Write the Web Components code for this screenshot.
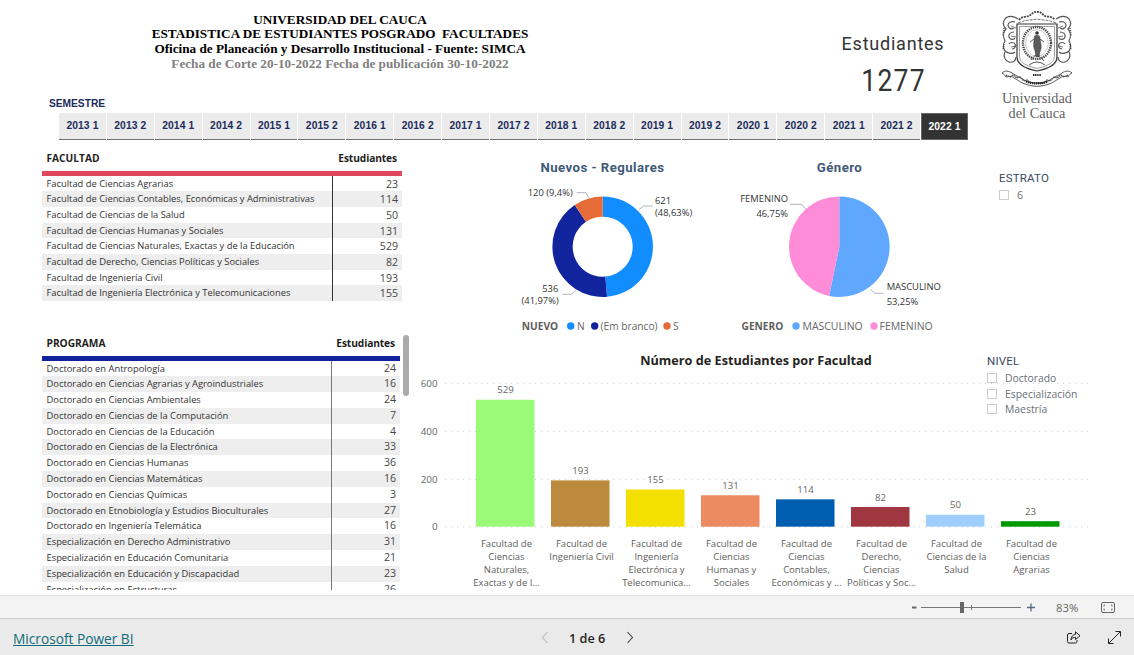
<!DOCTYPE html>
<html lang="es"><head><meta charset="utf-8"><title>Estudiantes Posgrado</title>
<style>
html,body{margin:0;padding:0;background:#fff;overflow:hidden}
body{font-family:"Open Sans","Liberation Sans",sans-serif}
</style></head><body>
<pbi-app>
  <report-top slot="top">
    <report-title>
      <span>UNIVERSIDAD DEL CAUCA</span>
      <span>ESTADISTICA DE ESTUDIANTES POSGRADO&nbsp; FACULTADES</span>
      <span>Oficina de Planeación y Desarrollo Institucional - Fuente: SIMCA</span>
      <span class="muted" style="color:#7f7f7f">Fecha de Corte 20-10-2022 Fecha de publicación 30-10-2022</span>
    </report-title>
    <kpi-card label="Estudiantes" value="1277"></kpi-card>
    <uni-seal></uni-seal>
    <semester-slicer label="SEMESTRE" selected="2022 1"
      items="2013 1,2013 2,2014 1,2014 2,2015 1,2015 2,2016 1,2016 2,2017 1,2017 2,2018 1,2018 2,2019 1,2019 2,2020 1,2020 2,2021 1,2021 2,2022 1"></semester-slicer>
  </report-top>
  <report-main slot="main">
    <data-table slot="left" heading="FACULTAD" metric="Estudiantes" accent="#e0475a" split="290" rule="#333" pitch="15.7" width="360" nudge="1" style="margin-top:3px">
      <table-row label="Facultad de Ciencias Agrarias" value="23"></table-row>
      <table-row label="Facultad de Ciencias Contables, Económicas y Administrativas" value="114"></table-row>
      <table-row label="Facultad de Ciencias de la Salud" value="50"></table-row>
      <table-row label="Facultad de Ciencias Humanas y Sociales" value="131"></table-row>
      <table-row label="Facultad de Ciencias Naturales, Exactas y de la Educación" value="529"></table-row>
      <table-row label="Facultad de Derecho, Ciencias Políticas y Sociales" value="82"></table-row>
      <table-row label="Facultad de Ingeniería Civil" value="193"></table-row>
      <table-row label="Facultad de Ingeniería Electrónica y Telecomunicaciones" value="155"></table-row>
    </data-table>
    <data-table slot="left" heading="PROGRAMA" metric="Estudiantes" accent="#12239e" split="288.5" rule="#777" pitch="15.8" width="358" nudge="0" scroll style="margin-top:30px;flex:1;min-height:0">
      <table-row label="Doctorado en Antropología" value="24"></table-row>
      <table-row label="Doctorado en Ciencias Agrarias y Agroindustriales" value="16"></table-row>
      <table-row label="Doctorado en Ciencias Ambientales" value="24"></table-row>
      <table-row label="Doctorado en Ciencias de la Computación" value="7"></table-row>
      <table-row label="Doctorado en Ciencias de la Educación" value="4"></table-row>
      <table-row label="Doctorado en Ciencias de la Electrónica" value="33"></table-row>
      <table-row label="Doctorado en Ciencias Humanas" value="36"></table-row>
      <table-row label="Doctorado en Ciencias Matemáticas" value="16"></table-row>
      <table-row label="Doctorado en Ciencias Químicas" value="3"></table-row>
      <table-row label="Doctorado en Etnobiología y Estudios Bioculturales" value="27"></table-row>
      <table-row label="Doctorado en Ingeniería Telemática" value="16"></table-row>
      <table-row label="Especialización en Derecho Administrativo" value="31"></table-row>
      <table-row label="Especialización en Educación Comunitaria" value="21"></table-row>
      <table-row label="Especialización en Educación y Discapacidad" value="23"></table-row>
      <table-row label="Especialización en Estructuras" value="26"></table-row>
    </data-table>
    <donut-pair slot="right"></donut-pair>
    <facultad-bars slot="right"></facultad-bars>
  </report-main>
  <zoom-bar slot="zoom"></zoom-bar>
  <report-footer slot="footer"></report-footer>
</pbi-app>

<script>
function def(name, css, html, init){
  customElements.define(name, class extends HTMLElement{
    connectedCallback(){
      if(this.shadowRoot) return;
      const r=this.attachShadow({mode:'open'});
      const a=n=>this.getAttribute(n);
      r.innerHTML='<style>'+css+'</style>'+(typeof html==='function'?html(a,this):html);
      if(init) init(r,this);
    }
  });
}
const SANS='"Open Sans","Noto Sans","Liberation Sans",sans-serif';
const DIN='Roboto,"Liberation Sans",sans-serif';

def('pbi-app',`:host{display:flex;flex-direction:column;width:1134px;height:655px;overflow:hidden;background:#fff}
 .r{height:595px;flex:none;display:flex;flex-direction:column;overflow:hidden}`,
 `<div class="r"><slot name="top"></slot><slot name="main"></slot></div><slot name="zoom"></slot><slot name="footer"></slot>`);

def('report-top',`:host{display:grid;grid-template-columns:680px 106px 214px 74px;grid-template-rows:97px 46px;flex:none}
 ::slotted(report-title){grid-column:1;grid-row:1}
 ::slotted(kpi-card){grid-column:3;grid-row:1}
 ::slotted(uni-seal){grid-column:4;grid-row:1/3}
 ::slotted(semester-slicer){grid-column:1/4;grid-row:2}`,`<slot></slot>`);

def('report-title',`:host{display:flex;flex-direction:column;align-items:center;padding-top:12.600px;box-sizing:border-box;
 font:bold 13.200px/14.700px "Liberation Serif","Times New Roman",serif;color:#000;white-space:pre}
 ::slotted(span){display:block}`,`<slot></slot>`);

def('kpi-card',`:host{display:flex;flex-direction:column;align-items:center;padding-top:32px;box-sizing:border-box;color:#333;font-family:${DIN}}
 .l{font-size:18px;line-height:24px;letter-spacing:.78px}
 .v{font-size:31.500px;line-height:36px;margin:7px 0 0 2px;letter-spacing:1.600px;transform:scaleX(.84)}`,
 a=>`<div class="l">${a('label')}</div><div class="v">${a('value')}</div>`);

def('uni-seal',`:host{display:flex;flex-direction:column;align-items:center;padding-top:9px;color:#5f5f5f;font-family:"Liberation Serif",serif;font-size:14.300px;line-height:15px;text-align:center;white-space:nowrap;box-sizing:border-box;width:74px}
 svg{display:block;margin-bottom:1px}`,
 `<svg width="72" height="81" viewBox="1001 9 72 81" fill="none" stroke="#4f4f4f" stroke-width=".8">
  <g stroke="#555" stroke-width="1.200">
   <path d="M1018 19c-4-3-10-4-13 0c-3 4-1 8 1 10c-3 3-3 8-1 12c-2 3-2 7 0 10c3 3 8 3 10 1"/>
   <path d="M1056 19c4-3 10-4 13 0c3 4 1 8-1 10c3 3 3 8 1 12c2 3 2 7 0 10c-3 3-8 3-10 1"/>
   <path d="M1015 22c-3-1-7 0-7 3s3 5 6 3M1014 32c-3 0-6 2-5 5s5 3 6 1M1009 44c1-2 5-2 6 0s0 5-3 5"/>
   <path d="M1059 22c3-1 7 0 7 3s-3 5-6 3M1060 32c3 0 6 2 5 5s-5 3-6 1M1065 44c-1-2-5-2-6 0s0 5 3 5"/>
   <path d="M1005 52c-2 4 0 9 4 10c4 1 7-1 7-5M1069 52c2 4 0 9-4 10c-4 1-7-1-7-5"/>
   <path d="M1011 26l5 2M1011 36l5 1M1011 47l5-1M1063 26l-5 2M1063 36l-5 1M1063 47l-5-1" stroke-width=".8"/>
  </g>
  <path d="M1004 28l-1 8M1004 44l-1 6M1070 28l1 8M1070 44l1 6" stroke-width="1.600" stroke-dasharray="1 1"/>
  <path d="M1019 20c3-4 7-3 10-4c3-2 5-5 8-4c3-1 5 2 8 4c3 1 7 0 10 4" stroke="#444" stroke-width="1.800" stroke-dasharray="2 .9"/>
  <path d="M1018 23c5-2 9-3 13-3c4-1 8-1 12 0c4 0 8 1 13 3" stroke-width=".8" stroke-dasharray="3 1"/>
  <path d="M1017 24H1057V57Q1057 67 1037 71Q1017 67 1017 57Z" stroke="#333" stroke-width="1.200" fill="#fff"/>
  <path d="M1019.500 26.500H1054.500V56.500Q1054.500 65 1037 68.500Q1019.500 65 1019.500 56.500Z" stroke="#777" stroke-width=".7"/>
  <ellipse cx="1037" cy="43" rx="14" ry="16" stroke="#444" stroke-width="2.400" stroke-dasharray="1.300 .9"/>
  <ellipse cx="1037" cy="43" rx="11.300" ry="13.300" stroke="#999" stroke-width=".5"/>
  <circle cx="1037" cy="33" r="1.800" fill="#333" stroke="none"/>
  <path d="M1034.500 36c1-1 4-1 5 0l1.500 8c.6 3 0 6-1 8l-1 5h-3l-1-6c-1-2-1.800-5-1.300-8z" fill="#5a5a5a" stroke="#333" stroke-width=".4"/>
  <path d="M1031 60c2-3 4-5 6-5s4 3 7 6M1030 42l4-3M1040 39l4 3M1029 65q8-6 16 0" stroke="#444" stroke-width=".9"/>
  <path d="M1002 73c3-3 7-2 10 0c4 3 8 4 12 7c8 4 18 4 26 0c4-3 8-4 12-7c3-2 7-3 10 0c-2 1-3 2-4 4c-3-1-6-1-8 1c-4 2-7 5-11 6c-8 3-16 3-24 0c-4-1-7-4-11-6c-2-2-5-2-8-1c-1-2-2-3-4-4z" fill="#fff" stroke="#444" stroke-width=".9"/>
  <path d="M1006 75l4 2l3-2l4 3l3-1l4 4l3-1l4 3h12l4-3l3 1l4-4l3 1l4-3l3 2l4-2" stroke="#444" stroke-width="1.300" stroke-dasharray="1.500 .7"/>
  <path d="M1026 81.500q11 4 22 0" stroke="#222" stroke-width="2.200" stroke-dasharray="1.300 .7"/>
  <path d="M1033 75h8" stroke="#222" stroke-width="1.800" stroke-dasharray="1.200 .6"/>
 </svg><div>Universidad</div><div>del Cauca</div>`);

def('semester-slicer',`:host{display:block;position:relative;font-family:"Liberation Sans",Arial,sans-serif;color:#1b2b5c;padding-left:59px;box-sizing:border-box;padding-top:16px}
 .t{position:absolute;left:49px;top:0;font-weight:bold;font-size:10.200px;line-height:13px}
 .row{display:flex;gap:1px}
 .b{width:46.900px;height:26.500px;box-sizing:border-box;background:#ebebeb;border-bottom:1px solid #6f6f6f;font-weight:bold;font-size:10.300px;display:flex;align-items:center;justify-content:center;white-space:nowrap;letter-spacing:.1px}
 .on{background:#333;color:#fff;border:1px solid #666}`,
 a=>`<div class="t">${a('label')}</div><div class="row">${a('items').split(',').map(s=>`<div class="b${s===a('selected')?' on':''}">${s}</div>`).join('')}</div>`);

def('report-main',`:host{display:flex;flex:1;min-height:0}
 .l{display:flex;flex-direction:column;width:412px;flex:none;padding-left:42px;box-sizing:border-box;padding-bottom:5.500px}
 .r{flex:1;display:flex;flex-direction:column;min-width:0}`,
 `<div class="l"><slot name="left"></slot></div><div class="r"><slot name="right"></slot></div>`);

def('data-table',`:host{display:block;position:relative;color:#252423;font-family:${SANS}}
 .w{height:100%;overflow:hidden;display:flex;flex-direction:column}
 .h{display:grid;height:25px;box-sizing:border-box;align-items:center;font-weight:700;font-size:10.200px;flex:none;padding-bottom:1px;color:#1f1e1d}
 .h div:first-child{padding-left:4.500px}
 .h div:last-child{text-align:right;padding-right:5px;white-space:nowrap;letter-spacing:-.1px}
 .line{height:4.500px;flex:none}
 .rows{flex:1;min-height:0;overflow:hidden}
 .sb{position:absolute;left:361px;top:4px;width:6px;height:61px;border-radius:3px;background:#ababab}`,
 (a,h)=>`<div class="w" style="width:${a('width')}px"><div class="h" style="grid-template-columns:${a('split')}px 1fr"><div>${a('heading')}</div><div>${a('metric')}</div></div>
  <div class="line" style="background:${a('accent')}"></div><div class="rows"><slot></slot></div></div>${h.hasAttribute('scroll')?'<div class="sb"></div>':''}`,
 (r,h)=>{[...h.querySelectorAll('table-row')].forEach(x=>{x.style.setProperty('--split',h.getAttribute('split')+'px');x.style.setProperty('--pitch',h.getAttribute('pitch')+'px');x.style.setProperty('--rule',h.getAttribute('rule'));x.style.setProperty('--nudge',h.getAttribute('nudge')+'px');});});

def('table-row',`:host{display:grid;grid-template-columns:var(--split) 1fr;height:var(--pitch);align-items:stretch;font-size:9.350px;color:#333}
 :host(:nth-child(even)){background:#eeeeee}
 .a{padding-left:4.500px;white-space:nowrap;overflow:hidden;line-height:calc(var(--pitch) + var(--nudge))}
 .b{border-left:1px solid var(--rule);text-align:right;padding-right:4px;font-size:10.600px;line-height:calc(var(--pitch) + var(--nudge));color:#484644;overflow:hidden}`,
 a=>`<div class="a">${a('label')}</div><div class="b">${a('value')}</div>`);

function arc(cx,cy,R,r,a0,a1){
  const p=(rad,an)=>{const t=(an-90)*Math.PI/180;return [(cx+rad*Math.cos(t)).toFixed(2),(cy+rad*Math.sin(t)).toFixed(2)].join(' ')};
  const lg=a1-a0>180?1:0;
  return r>0?`M${p(R,a0)}A${R} ${R} 0 ${lg} 1 ${p(R,a1)}L${p(r,a1)}A${r} ${r} 0 ${lg} 0 ${p(r,a0)}Z`
            :`M${cx} ${cy}L${p(R,a0)}A${R} ${R} 0 ${lg} 1 ${p(R,a1)}Z`;
}
const slices=(cx,cy,R,r,list)=>{let a=0;return list.map(([pct,c])=>{const b=a+pct*3.6,d=arc(cx,cy,R,r,a,b);a=b;return `<path d="${d}" fill="${c}"/>`}).join('')};

def('donut-pair',`:host{display:flex;height:202px;flex:none;position:relative}
 svg{display:block;flex:none;font-family:${SANS}}
 .sp{width:88px;flex:none}
 .ti{font:700 13.200px ${DIN};fill:#3e5a78;letter-spacing:.45px;text-anchor:middle}
 .lb{font-size:9.400px;fill:#333}
 .e{text-anchor:end}
 .cn{fill:none;stroke:#a9adb5;stroke-width:.9}
 .lg{font-size:10.200px;fill:#666}
 .lg2{font-size:10.450px;fill:#666}
 .lgb{font-size:10.200px;font-weight:700;fill:#605e5c}`,
 `<div class="sp"></div>
 <svg width="220" height="202" viewBox="500 143 220 202">
  <text class="ti" x="602.500" y="172">Nuevos - Regulares</text>
  ${slices(602.7,246.7,50.3,30,[[48.63,'#118dff'],[41.97,'#12239e'],[9.4,'#e66c37']])}
  <path class="cn" d="M576.500 192.700H586L588.500 197.500"/><path class="cn" d="M638.500 210L643.500 206H652.500"/><path class="cn" d="M562.500 294.300H571.500L576 290.500"/>
  <text class="lb" x="655" y="204">621</text><text class="lb" x="655" y="215.500">(48,63%)</text>
  <text class="lb e" x="572.700" y="196">120 (9,4%)</text>
  <text class="lb e" x="558.300" y="291.500">536</text><text class="lb e" x="558.700" y="304">(41,97%)</text>
  <text class="lgb" x="521.700" y="329.600">NUEVO</text>
  <circle cx="570.700" cy="326" r="3.700" fill="#118dff"/><text class="lg" x="577" y="329.600">N</text>
  <circle cx="594.700" cy="326" r="3.700" fill="#12239e"/><text class="lg" x="600.500" y="329.600">(Em branco)</text>
  <circle cx="667" cy="326" r="3.700" fill="#e66c37"/><text class="lg" x="673" y="329.600">S</text>
 </svg>
 <svg width="240" height="202" viewBox="720 143 240 202">
  <text class="ti" x="839.500" y="172">Género</text>
  ${slices(839.3,246.7,50.3,0,[[53.25,'#60a8ff'],[46.75,'#ff8cd8']])}
  <path class="cn" d="M790 204.300H801.500L806 209.500"/><path class="cn" d="M870.500 289.500L875 293.300H883.500"/>
  <text class="lb e" x="788" y="201.500">FEMENINO</text><text class="lb e" x="788" y="216.500">46,75%</text>
  <text class="lb" x="886.700" y="290">MASCULINO</text><text class="lb" x="886.700" y="304.500">53,25%</text>
  <text class="lgb" x="741.500" y="329.600">GENERO</text>
  <circle cx="796" cy="326" r="3.700" fill="#60a8ff"/><text class="lg2" x="802.500" y="329.600">MASCULINO</text>
  <circle cx="874" cy="326" r="3.700" fill="#ff8cd8"/><text class="lg2" x="879.500" y="329.600">FEMENINO</text>
 </svg>
 <check-slicer label="ESTRATO" items="6" style="margin:28px 0 0 39px" gap="8"></check-slicer>`);

def('check-slicer',`:host{display:block;font-family:${SANS};font-size:10.400px;color:#605e5c;white-space:nowrap}
 .t{font-family:${DIN};font-size:11.500px;line-height:14px;color:#3b4a5e;letter-spacing:.2px;margin-bottom:2px}
 .i{display:flex;align-items:center;height:15.800px}
 .c{width:10px;height:10px;box-sizing:border-box;border:1px solid #d0cdc8;background:#fff;flex:none}
 .x{margin-left:var(--g,8px);color:#6a6f78}`,
 a=>`<div class="t">${a('label')}</div>${a('items').split(',').map(s=>`<div class="i"><span class="c"></span><span class="x" style="--g:${a('gap')||8}px">${s}</span></div>`).join('')}`);

const BARS=[
 [529,'#99fb78',['Facultad de','Ciencias','Naturales,','Exactas y de I...']],
 [193,'#bc8a3c',['Facultad de','Ingeniería Civil']],
 [155,'#f4e000',['Facultad de','Ingeniería','Electrónica y','Telecomunica...']],
 [131,'#ec8b60',['Facultad de','Ciencias','Humanas y','Sociales']],
 [114,'#005eb0',['Facultad de','Ciencias','Contables,','Económicas y ...']],
 [82,'#a03640',['Facultad de','Derecho,','Ciencias','Políticas y Soc...']],
 [50,'#a0cfff',['Facultad de','Ciencias de la','Salud']],
 [23,'#009900',['Facultad de','Ciencias','Agrarias']]];

def('facultad-bars',`:host{display:block;position:relative;flex:1;min-height:0}
 svg{display:block;font-family:${SANS}}
 .ti{font-size:12.700px;font-weight:700;fill:#252423;text-anchor:middle}
 .ax{font-size:9.800px;fill:#666;text-anchor:end}
 .v{font-size:9.600px;fill:#666;text-anchor:middle}
 .c{font-size:9.500px;fill:#605e5c;text-anchor:middle}
 .g{stroke:#cfcfcf;stroke-width:1;stroke-dasharray:1 5}
 check-slicer{position:absolute;left:575px;top:9px}`,
 ()=>{
  let s=`<svg width="722" height="250" viewBox="412 345 722 250"><text class="ti" x="756" y="364.500">Número de Estudiantes por Facultad</text>`;
  [[600,383.500],[400,431.500],[200,479.500],[0,527]].forEach(([v,y])=>{
    s+=`<text class="ax" x="437.500" y="${y+3}">${v}</text><line class="g" x1="445" x2="1092" y1="${y}" y2="${y}"/>`;
  });
  BARS.forEach(([v,c,l],i)=>{
    const x=476+i*75,h=v*.24,y=526.7-h;
    s+=`<rect x="${x}" y="${y}" width="58.500" height="${h}" fill="${c}"/>`;
    s+=`<text class="v" x="${x+29.500}" y="${y-6.500}">${v}</text>`;
    l.forEach((t,j)=>{s+=`<text class="c" x="${x+30.500}" y="${547+j*13}">${t}</text>`});
  });
  return s+`</svg><check-slicer label="NIVEL" items="Doctorado,Especialización,Maestría" gap="8"></check-slicer>`;
 });

def('zoom-bar',`:host{display:flex;align-items:center;height:24px;flex:none;box-sizing:border-box;background:#f3f3f3;border-top:1px solid #e1e1e1;border-bottom:1px solid #cdcdcd;position:relative;color:#666;font-family:${SANS};justify-content:flex-end;padding-right:19px}
 svg{display:block;flex:none}
 .p{font-size:11.300px;width:22px;margin:0 23px 0 20px;text-align:center;white-space:nowrap}`,
 `<svg width="124" height="14" viewBox="913 600 124 14" stroke="#666" fill="none">
   <path d="M913 607.500H917.500" stroke-width="2"/>
   <path d="M922 607.500H1022" stroke="#777"/><path d="M972.500 605V610" stroke="#777"/>
   <rect x="961" y="602" width="4" height="11" fill="#666" stroke="none"/>
   <path d="M1028 607.500H1036M1032 603.500V611.500" stroke="#5a6a7a" stroke-width="1.300"/>
 </svg><span class="p">83%</span>
 <svg width="14" height="11" viewBox="0 0 14 11" fill="none" stroke="#666"><rect x=".5" y=".5" width="13" height="10" rx="1.500"/><path d="M4 3H3V4.500M10 3H11V4.500M4 8H3V6.500M10 8H11V6.500" stroke-width=".9"/></svg>`);

def('report-footer',`:host{display:grid;grid-template-columns:541px 110px 1fr;align-items:center;height:36px;flex:none;background:#eaeaea;font-family:${SANS};color:#252423}
 a{font-size:13.700px;color:#0f6b78;text-decoration:underline;padding-left:13px;white-space:nowrap;margin-top:3px}
 .pg{display:flex;align-items:center;font-size:12.700px;font-weight:600;white-space:nowrap;height:100%;margin-top:1px}
 .pg span{margin:0 21px 0 20px}
 .act{display:flex;justify-content:flex-end;gap:27px;padding-right:13px;margin-top:1px}
 svg{display:block;flex:none}`,
 `<a href="#">Microsoft Power BI</a>
 <div class="pg"><svg width="8" height="13" viewBox="0 0 8 13" fill="none" stroke="#b5b5b5" stroke-width="1.100"><path d="M6.500 1L1.500 6.500L6.500 12"/></svg>
  <span>1 de 6</span>
  <svg width="8" height="13" viewBox="0 0 8 13" fill="none" stroke="#444" stroke-width="1.100"><path d="M1.500 1L6.500 6.500L1.500 12"/></svg></div>
 <div class="act">
  <svg width="14" height="13" viewBox="0 0 14 13" fill="none" stroke="#222" stroke-width="1"><path d="M5 2.500H2A1.500 1.500 0 0 0 .5 4V10.500A1.500 1.500 0 0 0 2 12H8.500A1.500 1.500 0 0 0 10 10.500V9"/><path d="M8.500 .8L13 4.800L8.500 8.500V6.300C6.500 6.200 5 7 4 9C4 5.800 5.800 3.500 8.500 3.300Z"/></svg>
  <svg width="13" height="13" viewBox="0 0 13 13" fill="none" stroke="#222" stroke-width="1"><path d="M.8 12.200L12.200 .8M7.500 .5H12.500V5.500M.5 7.500V12.500H5.500"/></svg>
 </div>`);
</script>
</body></html>
